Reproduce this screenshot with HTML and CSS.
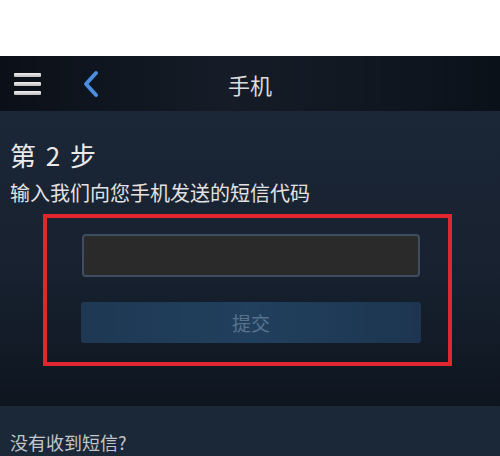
FILE: index.html
```html
<!DOCTYPE html>
<html lang="zh-CN">
<head>
	<meta charset="utf-8" />
	<meta name="viewport" content="width=device-width, initial-scale=1" />
	<title>手机</title>
	<link rel="stylesheet" href="styles.css">
</head>
<body>
	<div class="topgap"></div>
	<div class="header">
		<div class="menu">
			<span></span><span></span><span></span>
		</div>
		<svg class="back" width="18" height="28" viewBox="0 0 18 28">
			<path d="M14 3 L4 14 L14 25" fill="none" stroke="#4a8ee0" stroke-width="4" stroke-linecap="round" stroke-linejoin="round" />
		</svg>
		<div class="title">手机</div>
	</div>
	<div class="main">
		<h1>第 2 步</h1>
		<div class="hint">输入我们向您手机发送的短信代码</div>
		<div class="marked">
			<input class="code" type="text" />
			<button class="submit">提交</button>
		</div>
	</div>
	<div class="footer">
		<div>没有收到短信?</div>
	</div>
</body>
</html>
```

FILE: styles.css
```css
body {
	margin: 0;
	width: 500px;
	height: 456px;
	overflow: hidden;
	font-family: "Noto Sans CJK SC", "Liberation Sans", sans-serif;
	background-color: #1b2838;
}
.topgap {
	height: 56px;
	background-color: #fff;
}
.header {
	position: relative;
	height: 55px;
	display: flex;
	align-items: center;
	background: linear-gradient(90deg, #0b1018 0%, #151c27 45%, #111822 70%, #0b1119 100%);
}
.menu {
	display: flex;
	flex-direction: column;
	gap: 5px;
	margin-left: 14px;
}
.menu span {
	display: block;
	width: 27px;
	height: 4px;
	border-radius: 1px;
	background: linear-gradient(#f0f0f0, #bdbdbd);
}
.back {
	margin-left: 41px;
}
.title {
	position: absolute;
	left: 0;
	right: 0;
	text-align: center;
	color: #dcdcdc;
	font-size: 22px;
	pointer-events: none;
}
.main {
	height: 267px;
	padding: 28px 0 0 10px;
	background: linear-gradient(#1b2637 0%, #17212f 55%, #0e151f 100%);
}
.main h1 {
	margin: 0;
	font-size: 26px;
	font-weight: normal;
	line-height: 32px;
	word-spacing: 4px;
	color: #eaeaea;
}
.hint {
	margin-top: 9px;
	font-size: 20px;
	line-height: 26px;
	color: #e2e2e2;
}
.marked {
	width: 338px;
	margin: 8px 0 0 33px;
	padding: 16px 28px 19px 35px;
	border: 4px solid #e0262e;
	display: flex;
	flex-direction: column;
	gap: 25px;
}
.code {
	box-sizing: border-box;
	height: 43px;
	margin: 0;
	background-color: #2a2a2a;
	border: 2px solid #3e4e60;
	border-radius: 4px;
}
.submit {
	height: 41px;
	margin: 0 -1px;
	border: none;
	border-radius: 3px;
	background: linear-gradient(90deg, #1e3853, #21405d 50%, #1d3550);
	color: #58728e;
	font-family: inherit;
	font-size: 19px;
}
.footer {
	padding: 25px 0 0 10px;
	font-size: 18px;
	line-height: 22px;
	color: #c3c6ca;
}
```
